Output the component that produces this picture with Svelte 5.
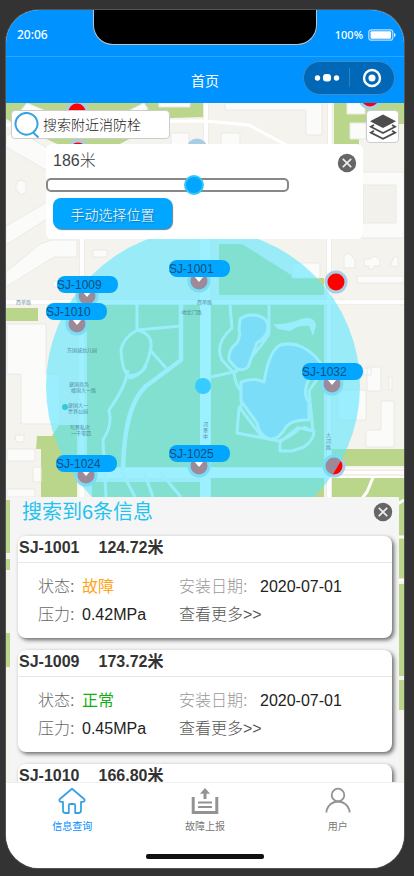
<script>
  let radius = $state(186);
  let panelOpen = $state(true);
  let listOpen = $state(true);

  const pins = [
    { id: 'SJ-1001', x: 169, y: 260, cx: 199, cy: 281 },
    { id: 'SJ-1009', x: 57, y: 276, cx: 87, cy: 296 },
    { id: 'SJ-1010', x: 46, y: 303, cx: 77, cy: 324 },
    { id: 'SJ-1032', x: 302, y: 363, cx: 332, cy: 384 },
    { id: 'SJ-1024', x: 56, y: 455, cx: 86, cy: 475 },
    { id: 'SJ-1025', x: 169, y: 445, cx: 199, cy: 466 }
  ];
  const otherHydrants = [
    [77, 112], [78, 151], [370, 98], [336, 282], [334, 466]
  ];
  const hydrants = [
    { id: 'SJ-1001', distance: '124.72', state: '故障', ok: false, pressure: '0.42MPa', date: '2020-07-01' },
    { id: 'SJ-1009', distance: '173.72', state: '正常', ok: true, pressure: '0.45MPa', date: '2020-07-01' },
    { id: 'SJ-1010', distance: '166.80' }
  ];
</script>

{#snippet closeIcon()}
  <svg viewBox="0 0 20 20" width="20" height="20" aria-hidden="true">
    <circle cx="10" cy="10" r="9.2" fill="#666" />
    <path d="M5.8 5.8l8.4 8.4M14.2 5.8l-8.4 8.4" stroke="#eee" stroke-width="1.7" />
  </svg>
{/snippet}

<div class="phone">
  <div class="status">
    <span class="time">20:06</span>
    <span class="notch"></span>
    <span class="power">
      100%
      <svg viewBox="0 0 28 12" width="28" height="12" aria-hidden="true">
        <rect x=".8" y=".8" width="24" height="10.4" rx="2.5" fill="none" stroke="#b8e0ff" stroke-width="1.2" />
        <rect x="2.5" y="2.2" width="20.6" height="7.6" rx="1" fill="#fff" />
        <path d="M26 4v4q1.6-.5 1.6-2T26 4" fill="#fff" />
      </svg>
    </span>
  </div>

  <header>
    <h1>首页</h1>
    <div class="capsule">
      <button aria-label="菜单">
        <svg viewBox="0 0 26 10" width="26" height="10"><g fill="#fff"><circle cx="3.5" cy="5" r="2.7" /><rect x="9" y="1" width="8" height="7.6" rx="3" /><circle cx="22.5" cy="5" r="2.7" /></g></svg>
      </button>
      <button aria-label="关闭小程序">
        <svg viewBox="0 0 20 20" width="20" height="20"><circle cx="10" cy="10" r="8" fill="none" stroke="#fff" stroke-width="2.4" /><circle cx="10" cy="10" r="3.5" fill="#fff" /></svg>
      </button>
    </div>
  </header>

  <main>
    <svg class="map" viewBox="6 103 398 679" preserveAspectRatio="xMidYMin slice" aria-label="地图">
      <rect x="6" y="103" width="398" height="679" fill="#f5f3ee" />
      <!-- green areas -->
      <g fill="#bad68b">
        <path d="M6 103H205V117L170 118L112 148H66L40 136L6 119Z" />
        <path d="M334 103H404V124H359V145H334Z" />
        <path d="M6 308H38V321H6Z" />
        <path d="M87 305H200V467H87ZM211 305H324V467H211ZM219 244H242L296 278H324V295H219Z" />
        <path d="M37 436H52L59 425H77V497H41V449H36ZM92 482H200V497H92ZM211 478H324V497H211Z" />
        <path d="M332 449H404V466H332ZM332 478H404V580H332ZM6 500H11V553H6ZM6 559H11V570H6ZM6 633H11V667H6ZM398 584H404V676H398ZM398 680H404V710H398Z" />
      </g>
      <!-- buildings -->
      <g fill="#fbfbfa" stroke="#eae9e6" stroke-width="1">
        <path d="M21 110L27 103L65 119L60 126ZM128 111L144 103L148 109L135 116Z" />
        <path d="M6 137L16 129L52 151V168L46 170L6 147ZM6 226L47 202V219L6 245ZM6 272L40 244L52 240H77V257H54L6 287Z" />
        <path d="M16 184L20 180L26 182V192L21 195L16 189ZM159 103H190V107H159Z" />
        <path d="M171 133H189V147H171ZM225 103H322V135H306V110H225ZM221 133H240V149H221Z" />
        <path d="M347 103H365V114H347ZM350 123H366V139H350ZM360 172H404V238H362Z" />
        <path d="M363 185H396V223H363Z" fill="#f3f1eb" />
        <path d="M344 256L349 253L355 260V268H344ZM364 259H370L375 256L380 260V266H374V269H369V266H364ZM390 266L394 257H398V267ZM357 276H404V283H357Z" />
        <path d="M7 324H46V374H60V424H21V374H7ZM93 250H107V257H93ZM53 281H61V287H53ZM292 263H320V278H292ZM7 449H35V461H7ZM15 435H24V442H16ZM33 467H41V482H33ZM7 489H35V497H7Z" />
        <path d="M338 390H366V420H338ZM367 367H381V391H367ZM389 376H392V390H389ZM381 401H394V447H366V430H381ZM364 368H371V375H364Z" />
      </g>
      <!-- roads -->
      <g fill="none" stroke="#ebe8df" stroke-width="6">
        <path d="M6 302H404M82 239V305M329 239V497M206 103V144M330 103V144" />
      </g>
      <g fill="none" stroke="#fff" stroke-width="4.4">
        <path d="M6 302H404M82 239V497M329 239V497M206 103V144M330 103V144" />
        <path d="M6 125L60 122L206 121L249 125L290 147M81 305V497" stroke-width="3" />
        <path d="M205 239V497M83 473H404" stroke-width="10" />
        <path d="M374 475L367 492L357 505M404 500L396 505M398 537H404M398 580H404" stroke-width="3" />
      </g>
      <path d="M334 470H404M334 475H404" stroke="#e4e0d2" />
      <!-- park footpaths -->
      <g fill="none" stroke="#f8f9f8" stroke-width="3" stroke-linejoin="round">
        <path d="M137 304V330Q123 338 121 350Q122 372 130 378Q145 375 150 352Q155 334 137 330L181 326" />
        <path d="M181 304V360L146 386Q124 406 123 470" stroke-width="4.5" />
        <path d="M151 351L166 368M128 370Q126 386 109 410Q113 425 103 440L106 497M127 376Q142 375 146 366M122 472L135 497M144 472L153 497M160 472L181 497" />
        <path d="M230 305L232 328Q214 344 222 360L234 373Q235 385 243 393Q244 403 239 408L237 433L279 441Q291 437 300 428L314 431Q314 440 304 447L292 451H280V442L299 427M269 305V334Q258 352 237 371L211 377M240 408Q252 424 263 438M303 427L313 431L309 391L320 375" />
      </g>
      <!-- ponds -->
      <g fill="#acd0ed" stroke="#f8f9f8" stroke-width="3" stroke-linejoin="round">
        <path d="M240 319Q248 313 259 316Q269 319 268 328Q267 337 257 343L248 367Q243 372 236 368L229 360Q228 349 237 343Q241 336 239 330Z" />
        <path d="M280 345Q292 342 302 347Q313 352 322 365L309 379Q302 394 309 402V420Q292 419 286 427Q279 440 270 439Q259 436 257 423L241 401V382Q254 377 264 382Q269 351 280 345Z" />
      </g>
      <path d="M273 324Q287 325 301 319Q315 315 316 326L313 336L309 326Q298 325 290 331L278 329Z" fill="#f8f9f8" />

      <!-- hydrants -->
      <g fill="#f00" stroke="#a9cde5" stroke-width="3">
        <circle cx="197" cy="149" r="9" fill="#a9cde5" />
        {#each otherHydrants as [x, y]}<circle cx={x} cy={y} r="10" />{/each}
        {#each pins as p}<circle cx={p.cx} cy={p.cy} r="10" />{/each}
      </g>
      <circle cx="203" cy="386" r="157" fill="#5ce6ff" fill-opacity=".6" />
      <circle cx="203" cy="386" r="8" fill="#38cbff" />

      <!-- place names -->
      <g class="place">
        <text x="16" y="304">西单路</text><text x="197" y="304">西单路</text>
        <text x="180" y="314">·地北门路</text><text x="67" y="352">万国城幼儿园</text>
        <text x="69" y="386">建国商务</text><text x="71" y="392">楼国大一路</text>
        <text x="68" y="407">建国大一</text><text x="68" y="413">世界公园</text>
        <text x="70" y="429">写景私房</text><text x="71" y="435">一千零四</text>
        <text x="203" y="426">河</text><text x="203" y="432">景</text><text x="203" y="438">中</text>
        <text x="326" y="437">大</text><text x="326" y="443">河</text><text x="326" y="449">路</text>
      </g>
      <circle cx="65" cy="407" r="3" fill="#35c7dc" />

      {#each pins as p}
        <path d="M{p.cx - 5} {p.cy - 5}h10l-5 6z" fill="#fff" />
        <rect x={p.x} y={p.y} width="61" height="17" rx="8" fill="#00a6ff" />
        <text class="pin" x={p.x} y={p.y + 13}>{p.id}</text>
      {/each}
    </svg>

    <div class="tools">
      <label class="search">
        <svg viewBox="0 0 26 26" width="26" height="26" aria-hidden="true">
          <path d="M19 20.5A11 10.8 0 1 1 21.5 18L19 20.5L24.5 25.5" fill="none" stroke="#36a3e0" stroke-width="2" />
        </svg>
        <input type="text" placeholder="搜索附近消防栓" aria-label="搜索附近消防栓" />
      </label>
      <button class="layers" aria-label="图层">
        <svg viewBox="0 0 28 28" width="28" height="28">
          <path d="M14 1.5L27 8.2L14 15L1 8.2Z" fill="#4d4d4d" />
          <path d="M5 12L1.8 13.8L14 20L26.2 13.8L23 12M5 17.8L1.8 19.6L14 25.8L26.2 19.6L23 17.8" fill="none" stroke="#4d4d4d" stroke-width="1.7" />
        </svg>
      </button>
    </div>

    {#if panelOpen}
      <section class="range">
        <div class="row">
          <label for="radius">{radius}米</label>
          <button class="close" aria-label="关闭" onclick={() => (panelOpen = false)}>{@render closeIcon()}</button>
        </div>
        <input id="radius" type="range" min="0" max="300" bind:value={radius} />
        <button class="pick">手动选择位置</button>
      </section>
    {/if}

    {#if listOpen}
      <section class="sheet">
        <div class="row">
          <h2>搜索到6条信息</h2>
          <button class="close" aria-label="关闭列表" onclick={() => (listOpen = false)}>{@render closeIcon()}</button>
        </div>
        {#each hydrants as h}
          <article>
            <h3><span>{h.id}</span><span>{h.distance}米</span></h3>
            {#if h.state}
              <div class="details">
                <p><span class="key">状态:</span><span class={h.ok ? 'ok' : 'fault'}>{h.state}</span></p>
                <p><span class="key pale">安装日期:</span><span>{h.date}</span></p>
                <p><span class="key">压力:</span><span>{h.pressure}</span></p>
                <p><a href="#{h.id}">查看更多&gt;&gt;</a></p>
              </div>
            {/if}
          </article>
        {/each}
      </section>
    {/if}
  </main>

  <footer>
    <nav>
      <a class="active" href="#query">
        <svg viewBox="0 0 28 28" width="28" height="28" fill="none" stroke="#36a3e0" stroke-width="1.8" stroke-linejoin="round" aria-hidden="true">
          <path d="M14 1.8L1.6 12.2Q.8 14.5 3 14.8H5V23.5Q5 26 7.5 26H10.8V18.5Q10.8 17 12.3 17H15.7Q17.2 17 17.2 18.5V26H20.5Q23 26 23 23.5V14.8H25Q27.2 14.5 26.4 12.2Z" />
        </svg>
        信息查询
      </a>
      <a href="#report">
        <svg viewBox="0 0 28 28" width="28" height="28" fill="none" stroke="#939393" stroke-width="3" aria-hidden="true">
          <path d="M2.2 10V25.5H25.8V10" /><path d="M7 15.5H21M7 20H21" stroke-width="2.2" /><path d="M14 12V5" /><path d="M9 6.8L14 1L19 6.8Z" fill="#939393" stroke="none" />
        </svg>
        故障上报
      </a>
      <a href="#user">
        <svg viewBox="0 0 28 28" width="28" height="28" fill="none" stroke="#939393" stroke-width="1.8" aria-hidden="true">
          <circle cx="14" cy="8" r="6.3" /><path d="M2.5 25.5V23.5Q5 15 14 14.5Q23 15 25.5 23.5V25.5" />
        </svg>
        用户
      </a>
    </nav>
    <div class="home-bar"></div>
  </footer>
</div>

<style>
  :global(body) { background: #333; }
  * { box-sizing: border-box; }
  h1, h2, h3, p { margin: 0; font-weight: 400; }
  button { border: 0; padding: 0; background: none; font: inherit; color: inherit; cursor: pointer; }
  svg { display: block; flex: none; }
  a { color: inherit; text-decoration: none; }

  .phone {
    display: flex;
    flex-direction: column;
    height: calc(100vh - 18px);
    margin: 10px 10px 8px 6px;
    border-radius: 33px;
    overflow: hidden;
    background: #fff;
    box-shadow: 0 0 0 1px #555;
    font-family: "Liberation Sans", "Noto Sans CJK SC", sans-serif;
    color: #222;
  }

  .status {
    display: grid;
    grid-template-columns: 1fr 224px 1fr;
    height: 47px;
    background: #0093ff;
    border-bottom: 1px solid #2ea6ff;
    color: #fff;
    font: 500 12px/50px "Noto Sans", sans-serif;
  }
  .time { padding-left: 11px; }
  .power { display: flex; align-items: center; justify-content: flex-end; gap: 5px; padding-right: 8px; font-size: 11px; }
  .notch { height: 35px; background: #000; border: 1px solid #b9c4cc; border-top: 0; border-radius: 0 0 20px 20px; }

  header {
    display: grid;
    grid-template-columns: 1fr auto 1fr;
    align-items: center;
    height: 46px;
    background: #0093ff;
    color: #fff;
  }
  h1 { grid-column: 2; font-size: 14px; line-height: 20px; padding-top: 2px; }
  .capsule {
    justify-self: end;
    display: flex;
    width: 92px;
    height: 34px;
    margin: 0 9px 4px 0;
    border: 1px solid #3b8dcb;
    border-radius: 17px;
    background: #0068b7;
  }
  .capsule button { flex: 1; display: grid; place-items: center; }
  .capsule button + button { position: relative; }
  .capsule button + button::before { content: ""; position: absolute; left: 0; top: 6px; height: 19px; border-left: 1px solid #2b83c5; }

  main {
    position: relative;
    flex: 1;
    min-height: 0;
    display: flex;
    flex-direction: column;
    padding: 7px 5px 0 4px;
    overflow: hidden;
  }
  .map { position: absolute; inset: 0; width: 100%; height: 100%; }
  .place { font-size: 5px; fill: #3d6c80; opacity: .75; }
  .pin { font-size: 12px; fill: #154f78; }

  .tools, .range, .sheet { position: relative; }
  .tools { display: flex; justify-content: space-between; align-items: flex-start; }
  .search {
    display: flex;
    align-items: center;
    gap: 3px;
    width: 159px;
    height: 29px;
    margin-left: 1px;
    padding-left: 2px;
    background: #fff;
    border: 1px solid #ccc;
    border-radius: 4px;
  }
  .search input {
    width: 100%;
    min-width: 0;
    border: 0;
    padding: 0;
    outline: 0;
    background: none;
    font: 300 14px/20px "Liberation Sans", "Noto Sans CJK SC", sans-serif;
  }
  .search input::placeholder { color: #222; opacity: 1; }
  .layers {
    display: grid;
    place-items: center;
    width: 33px;
    height: 33px;
    background: #fff;
    border: 1px solid #ccc;
    border-radius: 4px;
  }

  .row { display: flex; justify-content: space-between; align-items: center; }
  .range {
    height: 95px;
    margin: 1px 36px 0;
    padding-top: 7px;
    background: #fff;
    border-radius: 6px;
  }
  .range .row { height: 24px; padding: 0 6px 0 7px; font-size: 16px; font-weight: 300; line-height: 20px; color: #444; }
  .range label { align-self: flex-start; }
  .range input {
    appearance: none;
    display: block;
    width: 243px;
    max-width: 100%;
    height: 14px;
    margin: 3px 0 0;
    border: 2px solid #888;
    border-radius: 5px;
    background: #fff;
  }
  .range input::-webkit-slider-thumb {
    appearance: none;
    width: 20px;
    height: 20px;
    border: 2px solid #33c9f5;
    border-radius: 50%;
    background: #00a6ff;
  }
  .pick {
    display: block;
    width: 119px;
    height: 31px;
    margin: 6px 0 0 7px;
    background: #00a6ff;
    border-radius: 8px;
    box-shadow: 1px 1px 1px #5c8296;
    color: #fff;
    font-size: 14px;
    font-weight: 300;
    text-shadow: 1px 1px 1px #1c6fae;
  }

  .sheet {
    height: calc(42% + 3px);
    margin-top: auto;
    padding: 0 7px 0 8px;
    background: #f5f5f5;
    overflow: hidden;
  }
  .sheet .row { height: 30px; padding-left: 4px; margin-right: -1px; }
  h2 { font-size: 20px; line-height: 30px; color: #1fc3f0; }
  article {
    height: 102px;
    margin: 9px 0 12px;
    background: #fff;
    border-radius: 8px;
    box-shadow: 2px 2px 4px #666;
  }
  h3 {
    display: flex;
    gap: 19px;
    height: 27px;
    padding-left: 1px;
    border-bottom: 1px solid #e6e6e6;
    font: 700 16px/24px "Liberation Sans", "Noto Sans CJK SC", sans-serif;
    color: #333;
  }
  .details {
    display: grid;
    grid-template-columns: 141px 1fr;
    padding: 10px 0 0 20px;
    font-size: 16px;
    line-height: 28px;
  }
  .details p { display: flex; height: 28px; }
  .key { width: 44px; color: #666; font-weight: 300; white-space: nowrap; }
  .pale { width: 81px; color: #999; }
  .fault { color: #ffa31a; }
  .ok { color: #12b012; }
  .details a { color: #555; font-weight: 300; }

  footer { height: 86px; padding: 4px 0 9px; display: flex; flex-direction: column; justify-content: space-between; align-items: center; background: #fff; border-top: 1px solid #eee; }
  nav { display: grid; grid-template-columns: repeat(3, 1fr); width: 100%; }
  nav a { display: flex; flex-direction: column; align-items: center; gap: 5px; font-size: 10px; line-height: 14px; color: #777; }
  nav .active { color: #008cff; }
  .home-bar { width: 118px; height: 5px; border-radius: 2px; background: #111; }
</style>
